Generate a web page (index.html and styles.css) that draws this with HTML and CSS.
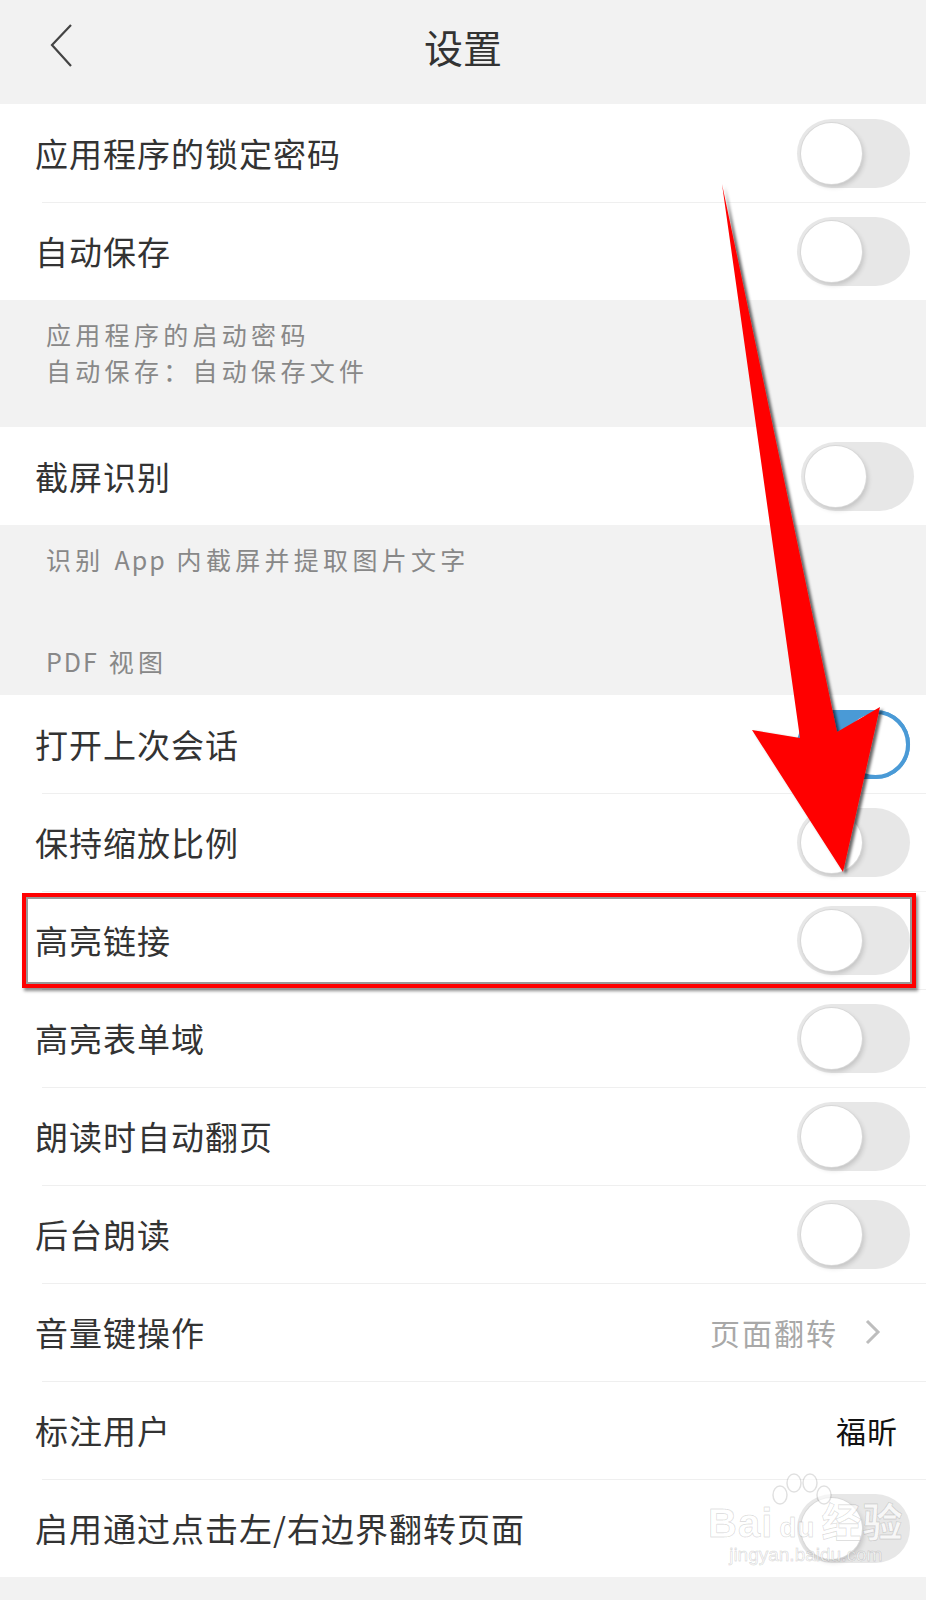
FILE: index.html
```html
<!DOCTYPE html>
<html lang="zh-CN">
<head>
<meta charset="utf-8">
<title>设置</title>
<link rel="stylesheet" href="styles.css">
</head>
<body>
<div class="page">
  <header class="nav">
    <div class="nav-left">
      <svg class="back" width="24" height="44" viewBox="0 0 24 44"><path d="M21 1 L2 21 L21 42" fill="none" stroke="#444" stroke-width="2.2"/></svg>
    </div>
    <h1 class="title">设置</h1>
    <div></div>
  </header>

  <section class="group">
    <div class="row"><span class="label">应用程序的锁定密码</span><span class="toggle"><span class="knob"></span></span></div>
    <div class="row"><span class="label">自动保存</span><span class="toggle"><span class="knob"></span></span></div>
  </section>
  <div class="note note-a">
    <p>应用程序的启动密码</p>
    <p>自动保存<span class="colon">：</span>自动保存文件</p>
  </div>

  <section class="group">
    <div class="row"><span class="label">截屏识别</span><span class="toggle shift"><span class="knob"></span></span></div>
  </section>
  <div class="note note-b">
    <p>识别 <span class="latin">App</span> 内截屏并提取图片文字</p>
    <p class="section-title"><span class="latin">PDF</span> 视图</p>
  </div>

  <section class="group">
    <div class="row"><span class="label">打开上次会话</span><span class="toggle on"><span class="knob"></span></span></div>
    <div class="row"><span class="label">保持缩放比例</span><span class="toggle"><span class="knob"></span></span></div>
    <div class="row marked"><span class="label">高亮链接</span><span class="toggle"><span class="knob"></span></span><span class="callout"></span></div>
    <div class="row"><span class="label">高亮表单域</span><span class="toggle"><span class="knob"></span></span></div>
    <div class="row"><span class="label">朗读时自动翻页</span><span class="toggle"><span class="knob"></span></span></div>
    <div class="row"><span class="label">后台朗读</span><span class="toggle"><span class="knob"></span></span></div>
    <div class="row row-link"><span class="label">音量键操作</span><span class="value">页面翻转<svg class="chev" width="18" height="28" viewBox="0 0 18 28"><path d="M3 3 L14 14 L3 25" fill="none" stroke="#bdbdbd" stroke-width="3"/></svg></span></div>
    <div class="row row-user"><span class="label">标注用户</span><span class="user">福昕</span></div>
    <div class="row"><span class="label">启用通过点击左/右边界翻转页面</span><span class="toggle"><span class="knob"></span></span>
      <span class="watermark">
        <svg class="paw" width="70" height="56" viewBox="0 0 70 56">
          <g fill="rgba(255,255,255,0.6)" stroke="rgba(0,0,0,0.12)" stroke-width="1.5">
            <ellipse cx="14" cy="22" rx="7" ry="9"/>
            <ellipse cx="28" cy="10" rx="7" ry="9"/>
            <ellipse cx="44" cy="10" rx="7" ry="9"/>
            <ellipse cx="58" cy="22" rx="7" ry="9"/>
          </g>
        </svg>
        <span class="wm-main">Bai<span class="wm-du">du</span>经验</span>
        <span class="wm-sub">jingyan.baidu.com</span>
      </span>
    </div>
  </section>

  <svg class="arrow" width="926" height="1600" viewBox="0 0 926 1600">
    <defs>
      <filter id="sh" x="-30%" y="-5%" width="160%" height="110%">
        <feDropShadow dx="3" dy="2" stdDeviation="1.6" flood-color="#000" flood-opacity="0.6"/>
      </filter>
    </defs>
    <polygon points="722,184 837,732 880,707 843,872 752,730 800,738" fill="#ff0000" filter="url(#sh)"/>
  </svg>
</div>
</body>
</html>
```

FILE: styles.css
```css
html, body {
  margin: 0;
  padding: 0;
}
body {
  background: #f2f2f2;
  font-family: "Noto Sans CJK SC", "Noto Sans", sans-serif;
  color: #333;
}
.page {
  position: relative;
  width: 926px;
  min-height: 1600px;
  background: #f2f2f2;
  overflow: hidden;
}
.nav {
  height: 104px;
  box-sizing: border-box;
  padding-bottom: 12px;
  display: grid;
  grid-template-columns: 1fr auto 1fr;
  align-items: center;
  background: #f2f2f2;
}
.nav-left {
  padding-left: 50px;
  display: flex;
  align-items: center;
}
.back { display: block; }
.title {
  margin: 0;
  font-size: 39px;
  font-weight: 400;
  line-height: 1;
  color: #333;
}
.group {
  background: #fff;
}
.row {
  height: 98px;
  box-sizing: border-box;
  display: flex;
  align-items: center;
  justify-content: space-between;
  padding: 0 16px 0 35px;
}
.row + .row {
  background: linear-gradient(#efefef, #efefef) no-repeat 42px 0 / calc(100% - 42px) 1px;
}
.label {
  font-size: 33px;
  letter-spacing: 1px;
  color: #333;
  line-height: 1;
}
.toggle {
  width: 113px;
  height: 69px;
  border-radius: 35px;
  background: #e7e7e7;
  box-sizing: border-box;
  padding: 4px;
  display: flex;
  align-items: center;
  flex: none;
}
.toggle.shift { margin-right: -4px; }
.knob {
  width: 61px;
  height: 61px;
  border-radius: 50%;
  background: #fff;
  box-shadow: 0 0 0 1px #d8d8d8, 2px 3px 5px rgba(0, 0, 0, 0.16);
}
.toggle.on {
  background: #4a9ad6;
  padding: 0;
  justify-content: flex-end;
}
.toggle.on .knob {
  width: 69px;
  height: 69px;
  box-sizing: border-box;
  border: 4px solid #4a9ad6;
  box-shadow: none;
}
.note {
  box-sizing: border-box;
  padding: 16px 0 0 46px;
  font-size: 25px;
  letter-spacing: 4.3px;
  line-height: 36px;
  color: #888;
}
.note p { margin: 0; }
.note .latin { letter-spacing: 2px; }
.note .colon { font-family: "Noto Sans CJK TC", sans-serif; }
.note-a { height: 127px; }
.note-b { height: 170px; }
.note-b .section-title {
  margin-top: 66px;
}
.value {
  display: flex;
  align-items: center;
  gap: 26px;
  font-size: 30px;
  letter-spacing: 2px;
  color: #a8a8a8;
  line-height: 1;
  margin-right: 28px;
}
.chev { display: block; }
.user {
  font-size: 30px;
  letter-spacing: 1px;
  color: #111;
  line-height: 1;
  margin-right: 12px;
}
.marked { position: relative; }
.callout {
  position: absolute;
  left: 22px;
  top: 2px;
  right: 10px;
  bottom: 1px;
  border: 4px solid #ff0000;
  box-shadow: inset 0 0 0 2px #999, 2px 3px 3px rgba(0, 0, 0, 0.45);
  pointer-events: none;
}
.row:last-child { position: relative; }
.watermark {
  position: absolute;
  left: 708px;
  top: -6px;
  display: flex;
  flex-direction: column;
  align-items: center;
  pointer-events: none;
  font-family: "Liberation Sans", "Noto Sans CJK SC", sans-serif;
}
.paw {
  display: block;
  margin-bottom: -26px;
  margin-left: -10px;
}
.wm-main {
  font-size: 40px;
  font-weight: 700;
  line-height: 1;
  color: rgba(255, 255, 255, 0.7);
  -webkit-text-stroke: 1px rgba(0, 0, 0, 0.12);
  letter-spacing: 1px;
}
.wm-du {
  font-size: 28px;
  margin: 0 6px;
}
.wm-sub {
  font-size: 19px;
  line-height: 1.3;
  color: rgba(255, 255, 255, 0.7);
  -webkit-text-stroke: 1px rgba(0, 0, 0, 0.12);
}
.arrow {
  position: absolute;
  left: 0;
  top: 0;
  pointer-events: none;
}
```
